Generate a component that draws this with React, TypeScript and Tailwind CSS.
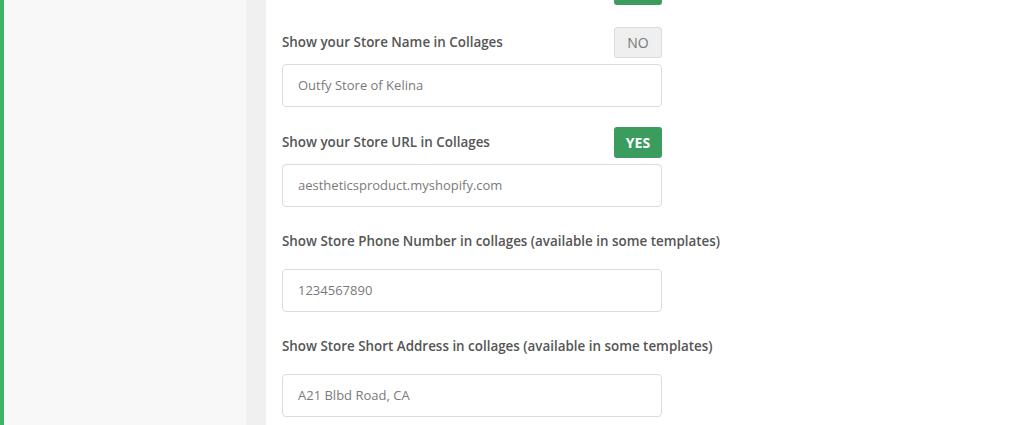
import React from "react";

const font = { fontFamily: "'Open Sans', Lato, sans-serif" };

function Toggle({ on, label = true }: { on: boolean; label?: boolean }) {
  return on ? (
    <div className="flex h-[31px] w-[48px] items-center justify-center rounded-[3px] bg-[#3a9d5e] text-[14px] font-bold text-white">
      {label ? "YES" : null}
    </div>
  ) : (
    <div className="flex h-[31px] w-[48px] items-center justify-center rounded-[3px] border border-[#dcdcdc] bg-[#efefef] text-[14px] text-[#777]">
      NO
    </div>
  );
}

function Field({
  label,
  value,
  toggle,
}: {
  label: string;
  value: string;
  toggle?: boolean;
}) {
  return (
    <div className="mt-[20px]">
      {toggle !== undefined ? (
        <div className="mb-[6px] flex h-[31px] items-center justify-between">
          <span className="text-[13.4px] font-semibold text-[#555]">{label}</span>
          <Toggle on={toggle} />
        </div>
      ) : (
        <div className="mb-[14px] flex h-[28px] items-center">
          <span className="whitespace-nowrap text-[13.4px] font-semibold text-[#555]">{label}</span>
        </div>
      )}
      <div className="flex h-[43px] items-center rounded-[4px] border border-[#dcdcdc] bg-white px-[15px] text-[13px] text-[#7a7a7a]">
        {value}
      </div>
    </div>
  );
}

export default function App() {
  return (
    <div className="flex h-[425px] w-[1024px] overflow-hidden bg-white" style={font}>
      <div className="w-[4px] shrink-0 bg-[#3cb46a]" />
      <div className="w-[242px] shrink-0 bg-[#f8f8f8]" />
      <div className="w-[20px] shrink-0 bg-[#f0f0f0]" />
      <div className="flex-1 bg-white pl-[16px]">
        <div className="flex w-[380px] flex-col">
          <div className="mt-[-26px] flex h-[31px] justify-end">
            <Toggle on={true} label={false} />
          </div>
          <div className="mt-[2px] flex flex-col">
            <Field label="Show your Store Name in Collages" value="Outfy Store of Kelina" toggle={false} />
            <Field label="Show your Store URL in Collages" value="aestheticsproduct.myshopify.com" toggle={true} />
            <Field
              label="Show Store Phone Number in collages (available in some templates)"
              value="1234567890"
            />
            <Field
              label="Show Store Short Address in collages (available in some templates)"
              value="A21 Blbd Road, CA"
            />
          </div>
        </div>
      </div>
    </div>
  );
}
